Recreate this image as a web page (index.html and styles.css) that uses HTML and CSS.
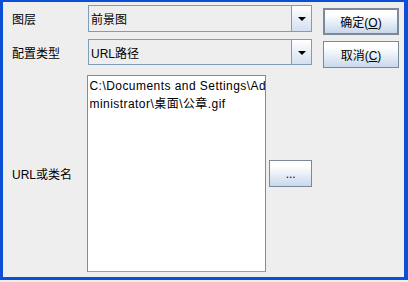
FILE: index.html
```html
<!DOCTYPE html>
<html lang="zh-CN">
<head>
  <meta charset="UTF-8" />
  <title>图层配置</title>
  <link rel="stylesheet" href="styles.css">
</head>
<body>
  <div class="frame">
    <div class="form">
      <div class="row row-layer">
        <label class="label">图层</label>
        <div class="combo">
          <span class="combo-text">前景图</span>
          <span class="combo-arrow"><span class="triangle"></span></span>
        </div>
      </div>

      <div class="row row-type">
        <label class="label">配置类型</label>
        <div class="combo">
          <span class="combo-text">URL路径</span>
          <span class="combo-arrow"><span class="triangle"></span></span>
        </div>
      </div>

      <div class="row row-url">
        <label class="label">URL或类名</label>
        <div class="textarea">
          <div>C:\Documents and Settings\Ad</div>
          <div>ministrator\桌面\公章.gif</div>
        </div>
        <button class="btn btn-browse">...</button>
      </div>
    </div>

    <div class="buttons">
      <button class="btn btn-action btn-default">确定(<u>O</u>)</button>
      <button class="btn btn-action">取消(<u>C</u>)</button>
    </div>
  </div>
</body>
</html>
```

FILE: styles.css
```css
* {
  box-sizing: border-box;
}

body {
  margin: 0;
  width: 408px;
  height: 282px;
  background: #eeeeee;
  font-family: 'Liberation Sans', 'Noto Sans CJK SC', sans-serif;
  font-size: 12px;
  color: #000;
  overflow: hidden;
}

.frame {
  display: flex;
  width: 408px;
  height: 280px;
  border-top: 2px solid #0b4fd6;
  border-left: 3px solid #0b4fd6;
  border-right: 4px solid #0b4fd6;
  border-bottom: 3px solid #0b4fd6;
  background: #eeeeee;
}

.form {
  width: 309px;
  display: flex;
  flex-direction: column;
}

.row {
  display: flex;
  align-items: center;
}

.row-layer {
  margin-top: 3px;
  height: 27px;
}

.row-type {
  margin-top: 7px;
  height: 26px;
}

.row-url {
  margin-top: 10px;
  height: 197px;
}

.label {
  width: 85px;
  padding-left: 9px;
  white-space: nowrap;
}

.combo {
  display: flex;
  width: 224px;
  height: 100%;
  border: 1px solid #7f9db9;
  background: #eeeeee;
}

.combo-text {
  flex: 1;
  display: flex;
  align-items: center;
  padding-left: 2px;
}

.combo-arrow {
  width: 20px;
  display: flex;
  align-items: center;
  justify-content: center;
  border-left: 1px solid #7f9db9;
  background: linear-gradient(to bottom, #ffffff, #d4e0f0);
}

.triangle {
  width: 0;
  height: 0;
  margin-top: 1px;
  border-left: 4px solid transparent;
  border-right: 4px solid transparent;
  border-top: 4px solid #000;
}

.textarea {
  width: 180px;
  height: 100%;
  padding: 1px 0 0 1px;
  border: 1px solid #8a8a8a;
  border-bottom-color: #a0a0a0;
  background: #fff;
  line-height: 18px;
  letter-spacing: 0.45px;
  white-space: nowrap;
  overflow: hidden;
}

.btn {
  font-family: 'Liberation Sans', 'Noto Sans CJK SC', sans-serif;
  font-size: 12px;
  color: #000;
  border: 1px solid #7a8a99;
  background: linear-gradient(to bottom, #ffffff 20%, #c8d8ec);
  padding: 0;
}

.btn-browse {
  width: 43px;
  height: 27px;
  margin-left: 3px;
}

.buttons {
  display: flex;
  flex-direction: column;
  gap: 6px;
  padding-top: 6px;
  margin-left: 11px;
}

.btn-action {
  width: 76px;
  height: 27px;
}

.btn-default {
  border: 2px solid #7a8a99;
}

u {
  text-decoration-thickness: 1px;
}
```
